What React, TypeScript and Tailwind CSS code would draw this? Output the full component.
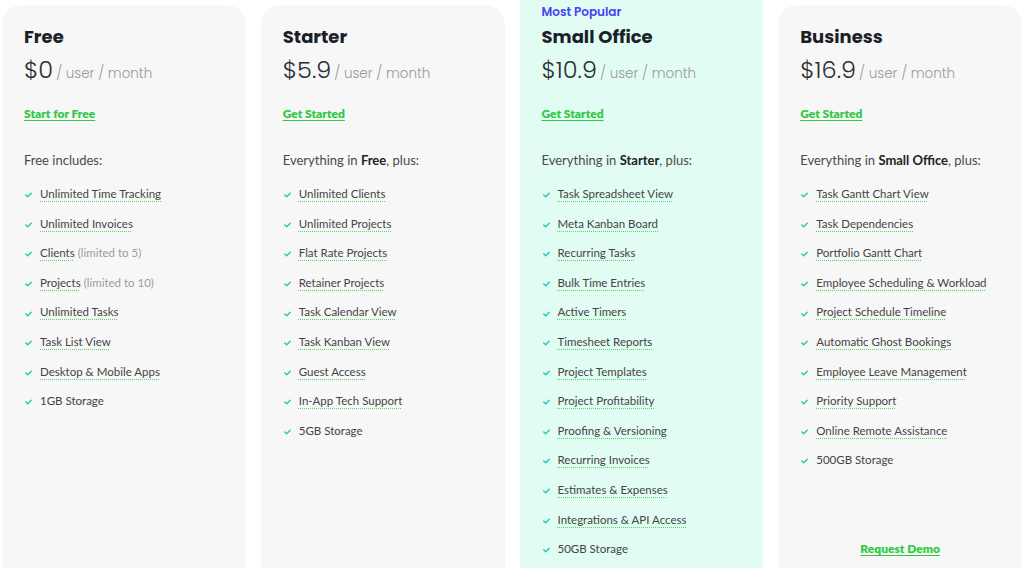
import React from "react";

type Item = { t: string; note?: string; plain?: boolean };
type Plan = {
  name: string;
  price: string;
  cta: string;
  intro: React.ReactNode;
  items: Item[];
  popular?: boolean;
  demo?: boolean;
};

const plans: Plan[] = [
  {
    name: "Free",
    price: "$0",
    cta: "Start for Free",
    intro: <>Free includes:</>,
    items: [
      { t: "Unlimited Time Tracking" },
      { t: "Unlimited Invoices" },
      { t: "Clients", note: "(limited to 5)" },
      { t: "Projects", note: "(limited to 10)" },
      { t: "Unlimited Tasks" },
      { t: "Task List View" },
      { t: "Desktop & Mobile Apps" },
      { t: "1GB Storage", plain: true },
    ],
  },
  {
    name: "Starter",
    price: "$5.9",
    cta: "Get Started",
    intro: (
      <>
        Everything in <b className="font-bold text-[#222]">Free</b>, plus:
      </>
    ),
    items: [
      { t: "Unlimited Clients" },
      { t: "Unlimited Projects" },
      { t: "Flat Rate Projects" },
      { t: "Retainer Projects" },
      { t: "Task Calendar View" },
      { t: "Task Kanban View" },
      { t: "Guest Access" },
      { t: "In-App Tech Support" },
      { t: "5GB Storage", plain: true },
    ],
  },
  {
    name: "Small Office",
    price: "$10.9",
    cta: "Get Started",
    popular: true,
    intro: (
      <>
        Everything in <b className="font-bold text-[#222]">Starter</b>, plus:
      </>
    ),
    items: [
      { t: "Task Spreadsheet View" },
      { t: "Meta Kanban Board" },
      { t: "Recurring Tasks" },
      { t: "Bulk Time Entries" },
      { t: "Active Timers" },
      { t: "Timesheet Reports" },
      { t: "Project Templates" },
      { t: "Project Profitability" },
      { t: "Proofing & Versioning" },
      { t: "Recurring Invoices" },
      { t: "Estimates & Expenses" },
      { t: "Integrations & API Access" },
      { t: "50GB Storage", plain: true },
    ],
  },
  {
    name: "Business",
    price: "$16.9",
    cta: "Get Started",
    demo: true,
    intro: (
      <>
        Everything in <b className="font-bold text-[#222]">Small Office</b>, plus:
      </>
    ),
    items: [
      { t: "Task Gantt Chart View" },
      { t: "Task Dependencies" },
      { t: "Portfolio Gantt Chart" },
      { t: "Employee Scheduling & Workload" },
      { t: "Project Schedule Timeline" },
      { t: "Automatic Ghost Bookings" },
      { t: "Employee Leave Management" },
      { t: "Priority Support" },
      { t: "Online Remote Assistance" },
      { t: "500GB Storage", plain: true },
    ],
  },
];

const Check = () => (
  <svg width="7" height="6" viewBox="0 0 7 6" className="mt-[3px] shrink-0">
    <path d="M0.8 3 L2.7 4.8 L6.2 1.2" fill="none" stroke="#22c9b4" strokeWidth="1.4" strokeLinecap="round" strokeLinejoin="round" />
  </svg>
);

const heading = { fontFamily: "Poppins, Inter, 'Noto Sans', sans-serif" };
const body = { fontFamily: "Lato, 'Open Sans', sans-serif" };

function Card({ p }: { p: Plan }) {
  return (
    <div
      className={
        "flex flex-col rounded-[20px] px-[22px] " +
        (p.popular ? "-mt-[25px] bg-[#e1fcf3] pt-[23px]" : "bg-[#f7f7f7] pt-[19px]")
      }
    >
      {p.popular && (
        <div className="mb-[3px] h-[18px] text-[12px] font-semibold leading-[18px] text-[#4343f2]" style={heading}>
          Most Popular
        </div>
      )}
      <div className="h-[26px] text-[18px] font-bold leading-[26px] text-[#1b1f2a]" style={heading}>
        {p.name}
      </div>
      <div className="mt-[5px] flex h-[30px] items-baseline leading-[30px]" style={heading}>
        <span className="text-[24px] font-light text-[#2a2d33]">{p.price}</span>
        <span className="ml-[3px] text-[13.5px] font-light text-[#9a9a9a]">/ user / month</span>
      </div>
      <a
        className="mt-[21px] h-[16px] self-start text-[12px] font-extrabold leading-[16px] text-[#2fc943] underline underline-offset-2"
        style={body}
      >
        {p.cta}
      </a>
      <div className="mt-[28px] h-[20px] text-[13px] leading-[20px] text-[#4a4a4a]" style={body}>
        {p.intro}
      </div>
      <ul className="mt-[9px] flex flex-col" style={body}>
        {p.items.map((it) => (
          <li key={it.t} className="flex h-[29.58px] items-center gap-[8px] pl-[1px] text-[11.5px] text-[#444]">
            <Check />
            <span>
              <span
                className={
                  it.plain
                    ? ""
                    : "underline decoration-[#4fdc66] decoration-dotted decoration-[1px] underline-offset-[3px]"
                }
              >
                {it.t}
              </span>
              {it.note && <span className="text-[#9b9b9b]"> {it.note}</span>}
            </span>
          </li>
        ))}
      </ul>
      {p.demo && (
        <a
          className="mt-[66px] h-[16px] self-center text-[12px] font-extrabold leading-[16px] text-[#2fc943] underline underline-offset-2"
          style={body}
        >
          Request Demo
        </a>
      )}
      <div className="h-[40px]" />
    </div>
  );
}

export default function App() {
  return (
    <div className="h-[568px] w-[1024px] overflow-hidden bg-white">
      <div className="grid grid-cols-4 gap-[15px] px-[2px] pt-[5px]">
        {plans.map((p) => (
          <Card key={p.name} p={p} />
        ))}
      </div>
    </div>
  );
}
